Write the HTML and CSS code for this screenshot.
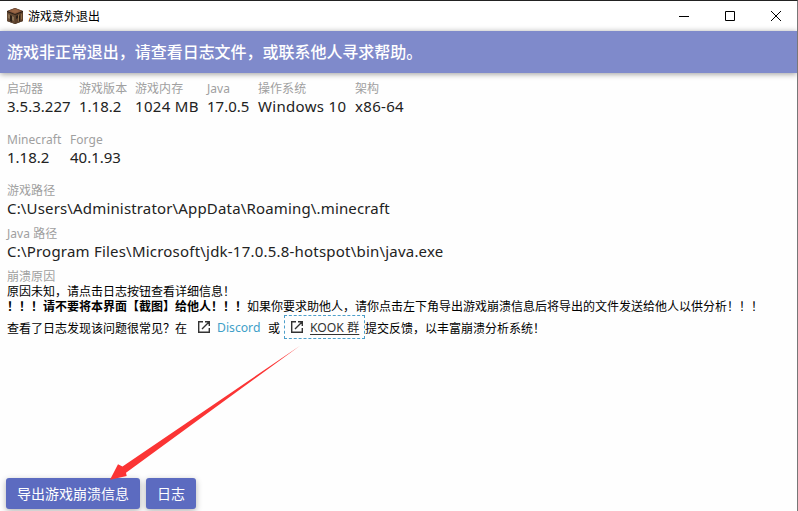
FILE: index.html
```html
<!DOCTYPE html>
<html lang="zh-CN">
<head>
<meta charset="utf-8">
<title>游戏意外退出</title>
<link rel="stylesheet" href="styles.css">
</head>
<body>
<div class="window">
  <header class="titlebar">
    <svg class="app-icon" viewBox="0 0 16 16">
      <path d="M8 0L16 3V13L8 16L0 13V3Z" fill="#2b2018"/>
      <path d="M8 0L15.5 3L8 6L.5 3Z" fill="#83543a"/>
      <path d="M8 1L13 3L8 5L3 3Z" fill="#9a6746"/>
      <path d="M0 4L8 7V16L0 13Z" fill="#624833"/>
      <path d="M16 4L8 7V16L16 13Z" fill="#5a3f2b"/>
      <path d="M1 6L3 7V11L1 10ZM5 8L7 9V13L5 12Z" fill="#8b7254"/>
      <path d="M3 7L5 8V14L3 13ZM9 8L11 7V10L9 11ZM12 8L13 7V13L12 14Z" fill="#2c2018"/>
      <path d="M11 7L12 6.500V13L11 14ZM14 6L15 5.500V11L14 12Z" fill="#8c6b46"/>
    </svg>
    <h1 class="window-title">游戏意外退出</h1>
    <div class="controls">
      <svg viewBox="0 0 10 10"><path d="M0 5.500H10"/></svg>
      <svg viewBox="0 0 10 10"><path d="M.5 .5H9.500V9.500H.5Z"/></svg>
      <svg viewBox="0 0 10 10"><path d="M0 0L10 10M10 0L0 10"/></svg>
    </div>
  </header>
  <div class="banner">游戏非正常退出，请查看日志文件，或联系他人寻求帮助。</div>
  <main class="content">
    <dl class="facts">
      <div><dt>启动器</dt><dd>3.5.3.227</dd></div>
      <div><dt>游戏版本</dt><dd>1.18.2</dd></div>
      <div><dt>游戏内存</dt><dd class="wide">1024 MB</dd></div>
      <div><dt>Java</dt><dd>17.0.5</dd></div>
      <div><dt>操作系统</dt><dd class="wide">Windows 10</dd></div>
      <div><dt>架构</dt><dd class="wide">x86-64</dd></div>
    </dl>
    <dl class="facts mods">
      <div><dt>Minecraft</dt><dd>1.18.2</dd></div>
      <div><dt>Forge</dt><dd>40.1.93</dd></div>
    </dl>
    <dl class="paths">
      <div><dt>游戏路径</dt><dd>C:\Users\Administrator\AppData\Roaming\.minecraft</dd></div>
      <div><dt>Java 路径</dt><dd class="java-path">C:\Program Files\Microsoft\jdk-17.0.5.8-hotspot\bin\java.exe</dd></div>
    </dl>
    <section class="reason">
      <h2>崩溃原因</h2>
      <p>原因未知，请点击日志按钮查看详细信息！</p>
      <p><b>！！！请不要将本界面【截图】给他人！！！</b>如果你要求助他人，请你点击左下角导出游戏崩溃信息后将导出的文件发送给他人以供分析！！！</p>
      <p class="links">
        <span>查看了日志发现该问题很常见？在</span>
        <a class="link"><svg viewBox="0 0 12 12"><path d="M5 .7H.7V11.300H11.300V7M7 .7H11.300V5M11 1L4 8"/></svg><span>Discord</span></a>
        <span class="or">或</span>
        <a class="link focused"><svg viewBox="0 0 12 12"><path d="M5 .7H.7V11.300H11.300V7M7 .7H11.300V5M11 1L4 8"/></svg><span>KOOK 群</span></a>
        <span>提交反馈，以丰富崩溃分析系统！</span>
      </p>
    </section>
  </main>
  <footer class="actions">
    <button class="export">导出游戏崩溃信息</button>
    <button class="log">日志</button>
  </footer>
  <svg class="arrow" viewBox="0 0 192 135"><path d="M191 .7L13.500 121.500L9 119.300L1 134.700L17.700 131L17 127.700L83 79.500Z"/></svg>
</div>
</body>
</html>
```
FILE: styles.css
```css
* { box-sizing: border-box; }
body, h1, h2, p, dl, dd { margin: 0; }
body {
  font-family: "Noto Sans", "Noto Sans CJK SC", sans-serif;
  background: #fff;
  color: #222;
}
.window {
  position: relative;
  display: flex;
  flex-direction: column;
  height: 511px;
  overflow: hidden;
  border-top: 1px solid #222;
  border-right: 1px solid #777;
  background: #fefefe;
}
.titlebar {
  display: flex;
  align-items: center;
  height: 30px;
  padding-left: 7px;
  background: #fff;
}
.app-icon { width: 16px; height: 16px; }
.window-title {
  margin-left: 5px;
  font: 12px/16px "Noto Sans CJK SC", sans-serif;
  color: #000;
}
.controls { display: flex; gap: 36px; margin-left: auto; padding-right: 16px; }
.controls svg {
  width: 10px;
  height: 10px;
  overflow: visible;
  fill: none;
  stroke: #000;
}
.banner {
  height: 42px;
  padding-left: 7px;
  background: #7f8acb;
  box-shadow: 0 1px 6px rgba(0, 0, 0, .4);
  color: #fff;
  font: 500 16px/41px "Noto Sans CJK SC", sans-serif;
  letter-spacing: -.03px;
}
.content { flex: 1; padding: 9px 0 0 7px; white-space: nowrap; }
dt, h2 {
  color: #a0a0a0;
  font-size: 12px;
  font-weight: 400;
  line-height: 14px;
  letter-spacing: .05px;
}
dd { font-size: 15px; line-height: 21px; }
dd.wide { letter-spacing: .32px; }
.facts { display: grid; grid-template-columns: 72px 56px 72px 51px 97px 60px; height: 51px; }
.mods { grid-template-columns: 63px 60px; }
.paths > div { height: 43px; }
.paths dd { letter-spacing: .16px; }
.paths .java-path { letter-spacing: .21px; }
.reason { margin-top: -1px; font: 12px/15px "Noto Sans CJK SC", sans-serif; color: #000; }
.links { display: flex; align-items: center; height: 28px; }
.link {
  display: flex;
  align-items: center;
  gap: 7px;
  width: 62px;
  margin-left: 11px;
  color: #3f9fc8;
  font: 12.200px/18px "Noto Sans", "Noto Sans CJK SC", sans-serif;
}
.link span { padding-top: 1px; }
.link svg { flex: none; width: 12px; height: 12px; fill: none; stroke: #333; stroke-width: 1.4; }
.or { margin-left: 8px; }
.focused {
  height: 24px;
  width: 81px;
  margin-left: 4px;
  padding-left: 6px;
  border: 1px dashed #4d9fca;
  color: #333;
}
.focused span { text-decoration: underline; text-underline-offset: 2px; }
.actions { display: flex; gap: 6px; height: 33px; padding-left: 6px; }
button {
  height: 31px;
  padding: 0;
  border: 0;
  border-radius: 3px;
  background: #5c6bc0;
  box-shadow: 0 2px 6px rgba(0, 0, 0, .3);
  color: #fff;
  font: 14px/31px "Noto Sans CJK SC", sans-serif;
}
.export { width: 134px; }
.log { width: 50px; }
.arrow {
  position: absolute;
  left: 109px;
  top: 344px;
  width: 192px;
  height: 135px;
  fill: #fb3434;
}
```
